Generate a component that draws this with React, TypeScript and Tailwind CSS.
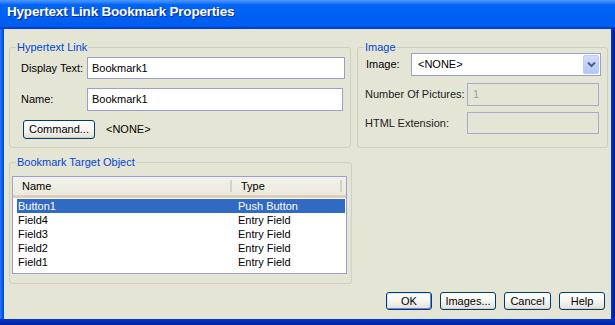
import React from "react";

function XPButton({ children, w, h = "h-[18px]", primary }: { children: React.ReactNode; w: string; h?: string; primary?: boolean }) {
  return (
    <button
      className={`${w} ${h} shrink-0 flex items-center justify-center rounded-[3px] border border-[#003C74] bg-gradient-to-b from-[#FFFFFF] via-[#F6F5F1] to-[#E2DFD6] text-[11px] leading-none text-black ${
        primary
          ? "shadow-[inset_1px_1px_0_#CEE7FF,inset_-1px_-1px_0_#6982EE]"
          : "shadow-[inset_0_-1px_0_#D6D0C5]"
      }`}
    >
      {children}
    </button>
  );
}

const rows = [
  { name: "Button1", type: "Push Button", sel: true },
  { name: "Field4", type: "Entry Field" },
  { name: "Field3", type: "Entry Field" },
  { name: "Field2", type: "Entry Field" },
  { name: "Field1", type: "Entry Field" },
];

export default function App() {
  return (
    <div className="w-[615px] h-[325px] flex flex-col overflow-hidden font-['Liberation_Sans',Arial,sans-serif] text-[11px] text-black">
      {/* title bar */}
      <div className="h-[29px] shrink-0 flex items-center pl-[7px] pb-[2px] border-b-[2px] border-[#0040D8] bg-gradient-to-b from-[#4A98FF] via-[#0064F5] via-[18%] to-[#005CEE]">
        <span className="text-white font-bold text-[13.5px] tracking-[-0.2px] [text-shadow:1px_1px_0_#0B2A8C]">
          Hypertext Link Bookmark Properties
        </span>
      </div>

      <div className="flex-1 flex min-h-0">
        <div className="w-[4px] shrink-0 bg-gradient-to-r from-[#2A78F5] via-[#0A5CEB] to-[#0048D8]" />

        {/* client area */}
        <div className="flex-1 bg-[#E5E5D6] flex flex-col pl-[5px] pr-[3px] pt-[12px]">
          {/* top row */}
          <div className="flex gap-[6px]">
            {/* Hypertext Link */}
            <fieldset className="w-[342px] shrink-0 border border-[#D0D0BF] rounded-[3px] p-0 m-0">
              <legend className="ml-[6px] px-[1px] leading-[12px] text-[#0046D5]">Hypertext Link</legend>
              <div className="flex flex-col pl-[11px] pr-[5px] pt-[4px] pb-[8px]">
                <div className="flex items-center h-[22px]">
                  <span className="w-[66px] shrink-0">Display Text:</span>
                  <div className="flex-1 h-full bg-white border border-[#9C9ED1] flex items-center pl-[4px]">Bookmark1</div>
                </div>
                <div className="flex items-center h-[23px] mt-[9px]">
                  <span className="w-[66px] shrink-0">Name:</span>
                  <div className="w-[256px] h-full bg-white border border-[#9C9ED1] flex items-center pl-[4px]">Bookmark1</div>
                </div>
                <div className="flex items-center mt-[9px] ml-[2px] gap-[11px]">
                  <XPButton w="w-[72px]" h="h-[19px]">Command...</XPButton>
                  <span>&lt;NONE&gt;</span>
                </div>
              </div>
            </fieldset>

            {/* Image */}
            <fieldset className="w-[251px] shrink-0 border border-[#D0D0BF] rounded-[3px] p-0 m-0">
              <legend className="ml-[6px] px-[1px] leading-[12px] text-[#0046D5]">Image</legend>
              <div className="flex flex-col pl-[8px] pr-[6px]">
                <div className="flex items-center h-[23px]">
                  <span className="w-[45px] shrink-0">Image:</span>
                  <div className="w-[190px] h-full bg-white border border-[#9C9ED1] flex items-center pl-[6px] pr-[1px]">
                    <span className="flex-1">&lt;NONE&gt;</span>
                    <div className="w-[16px] h-[19px] rounded-[2px] border border-[#BBCBF6] bg-gradient-to-b from-[#D3DEFB] to-[#B2C6F5] flex items-center justify-center">
                      <svg width="9" height="7" viewBox="0 0 9 7">
                        <path d="M1 1.5 L4.5 5 L8 1.5" fill="none" stroke="#4D6185" strokeWidth="2" />
                      </svg>
                    </div>
                  </div>
                </div>
                <div className="flex items-center h-[23px] mt-[7px]">
                  <span className="w-[102px] shrink-0 -ml-[1px] text-[#222]">Number Of Pictures:</span>
                  <div className="w-[132px] h-full border border-[#A9AAD0] flex items-center pl-[5px] text-[#A0A0A0]">1</div>
                </div>
                <div className="flex items-center h-[22px] mt-[6px]">
                  <span className="w-[102px] shrink-0 -ml-[1px] text-[#222]">HTML Extension:</span>
                  <div className="w-[132px] h-full border border-[#A9AAD0]" />
                </div>
              </div>
            </fieldset>
          </div>

          {/* Bookmark Target Object */}
          <fieldset className="w-[343px] mt-[8px] border border-[#D0D0BF] rounded-[3px] p-0 m-0">
            <legend className="ml-[6px] px-[1px] leading-[12px] text-[#0046D5]">Bookmark Target Object</legend>
            <div className="pl-[2px] pt-[8px] pb-[9px]">
              <div className="w-[335px] h-[98px] border border-[#9C9ED1] bg-white flex flex-col">
                <div className="h-[21px] flex bg-gradient-to-b from-[#F3F2EA] to-[#EBEADB] border-b-[3px] border-[#DCCFC2]">
                  <div className="w-[219px] flex items-center pl-[9px] border-r-[2px] border-r-[#D6D3C5] my-[3px]">Name</div>
                  <div className="w-[110px] flex items-center pl-[9px] border-r-[2px] border-r-[#D6D3C5] my-[3px]">Type</div>
                  <div className="flex-1" />
                </div>
                <div className="flex flex-col pl-[4px] pr-[1px] pt-[1px]">
                  {rows.map((r) => (
                    <div
                      key={r.name}
                      className={`h-[14px] flex items-center ${r.sel ? "bg-[#316AC5] text-white" : ""}`}
                    >
                      <span className="w-[221px] pl-[1px]">{r.name}</span>
                      <span>{r.type}</span>
                    </div>
                  ))}
                </div>
              </div>
            </div>
          </fieldset>

          {/* buttons */}
          <div className="flex justify-end gap-[8px] mt-[8px] pr-[3px]">
            <XPButton w="w-[46px]" primary>OK</XPButton>
            <XPButton w="w-[56px]">Images...</XPButton>
            <XPButton w="w-[47px]">Cancel</XPButton>
            <XPButton w="w-[46px]">Help</XPButton>
          </div>
        </div>

        <div className="w-[4px] shrink-0 bg-gradient-to-r from-[#0036D6] via-[#0024B8] to-[#001A8C]" />
      </div>
      <div className="h-[6px] shrink-0 bg-gradient-to-b from-[#0038D0] to-[#00229E]" />
    </div>
  );
}
